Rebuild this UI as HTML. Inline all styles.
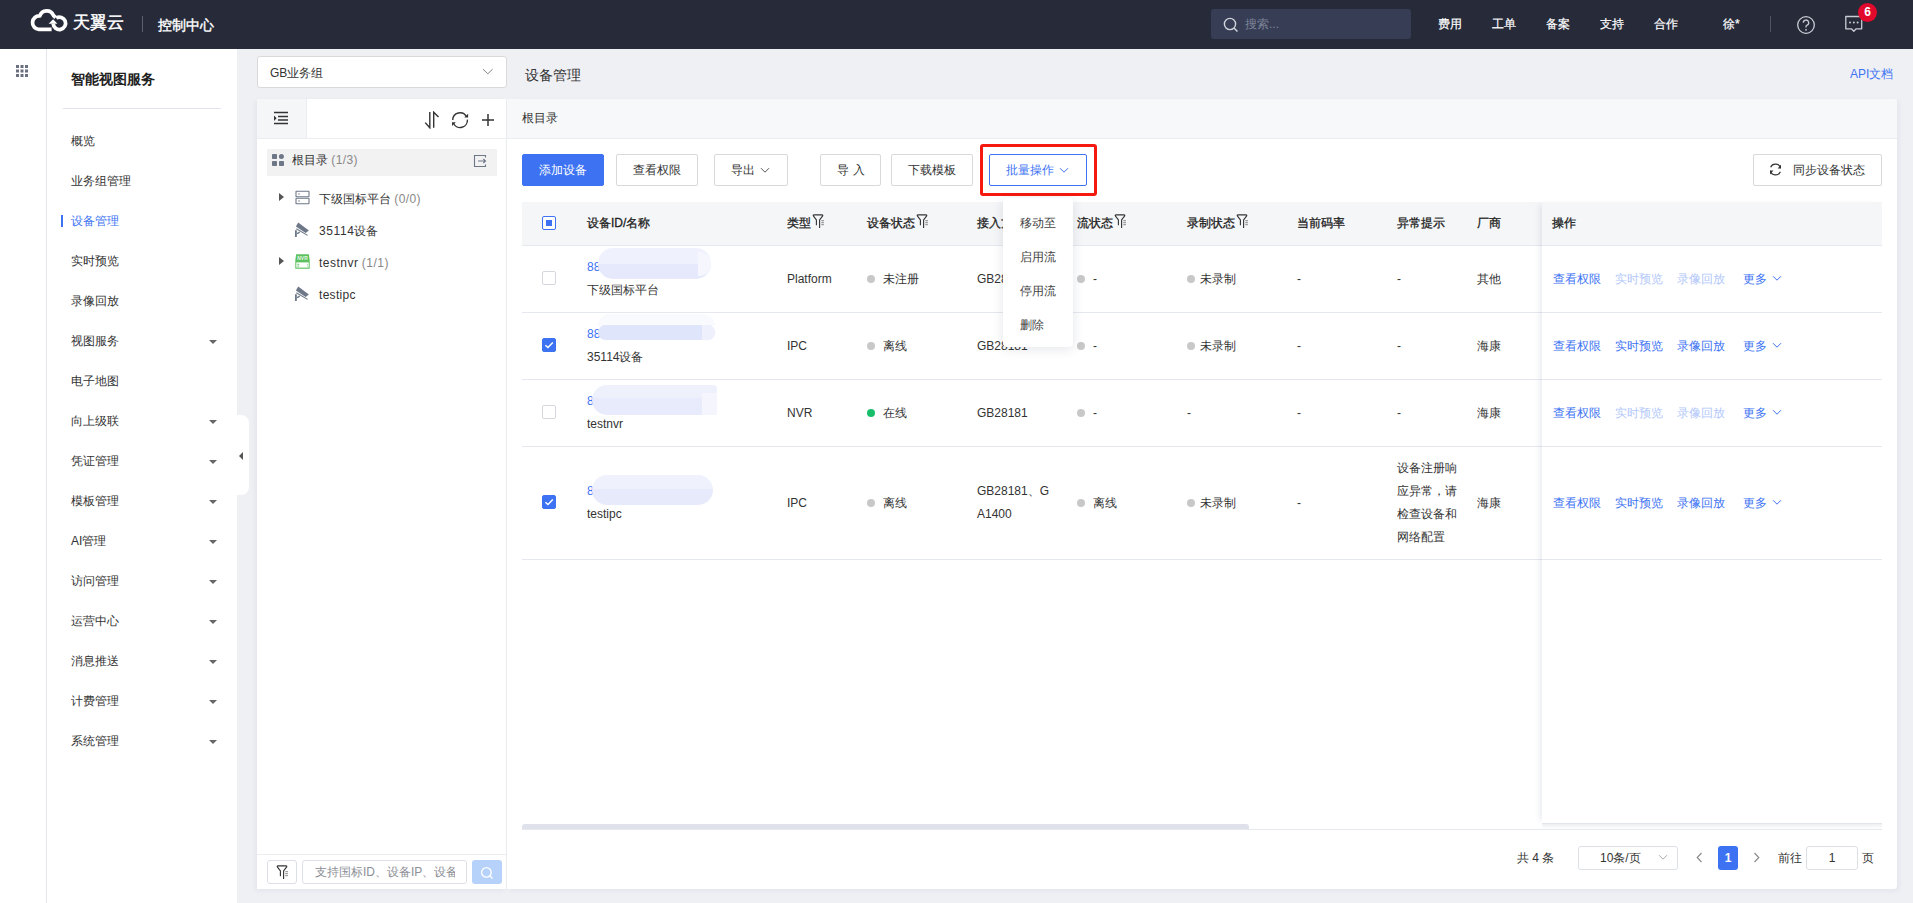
<!DOCTYPE html>
<html><head><meta charset="utf-8">
<style>
*{margin:0;padding:0;box-sizing:border-box}
html,body{width:1913px;height:903px;overflow:hidden;background:#eff0f4;font-family:"Liberation Sans",sans-serif;font-size:12px;color:#333}
.a{position:absolute}
#top{left:0;top:0;width:1913px;height:49px;background:#262a39}
.tw{color:#fff;font-size:13px;top:15px;line-height:18px;-webkit-text-stroke:0.2px #fff}
#rail{left:0;top:49px;width:47px;height:854px;background:#fff;border-right:1px solid #e3e5ec}
#side{left:47px;top:49px;width:190px;height:854px;background:#fff}
.mi{left:71px;font-size:12px;line-height:16px;color:#333}
.car{left:209px;width:0;height:0;border-left:4px solid transparent;border-right:4px solid transparent;border-top:4px solid #666}
#tree{left:257px;top:99px;width:250px;height:790px;background:#fff;border-right:1px solid #ebedf0;box-shadow:-2px 2px 5px rgba(30,40,70,0.05)}
#main{left:507px;top:99px;width:1390px;height:790px;background:#fff;border-radius:0 3px 3px 0;box-shadow:2px 2px 5px rgba(30,40,70,0.05)}
.btn{height:32px;border:1px solid #d9d9d9;border-radius:2px;background:#fff;font-size:12px;line-height:30px;text-align:center;color:#333}
.th{top:202px;font-weight:bold;font-size:12px;line-height:40px;color:#333}
.cb{width:14px;height:14px;border:1px solid #d5d8de;border-radius:2px;background:#fff}
.cbk{background:#3d73f3;border-color:#3d73f3}
.rl{left:522px;width:1360px;height:1px;background:#e8eaf0}
.td{font-size:12px;line-height:16px;color:#333}
.dot{width:7px;height:7px;border-radius:50%;background:#c8c8c8}
.lk{color:#3d73f3}
.lkd{color:#b8ccfa}
</style></head><body>

<!-- top bar -->
<div id="top" class="a">
<svg class="a" style="left:26px;top:5px" width="46" height="31" viewBox="0 0 46 31">
<path d="M25.6 24.3 H12.7 A6.6 6.6 0 0 1 13.8 10.9 A7.2 7.2 0 0 1 27.4 10.4 L29.6 12.6" fill="none" stroke="#fff" stroke-width="3.7" stroke-linejoin="round"/>
<path d="M30.2 13.0 A6.2 6.2 0 1 1 27.2 18.6" fill="none" stroke="#fff" stroke-width="3.7"/>
<path d="M22.6 18.8 L27.1 14.2 L31.4 18.8 Z" fill="#fff"/>
</svg>
<div class="a" style="left:73px;top:12px;font-size:17px;line-height:22px;color:#fff;-webkit-text-stroke:0.5px #fff">天翼云</div>
<div class="a" style="left:142px;top:16px;width:1px;height:16px;background:#5b5f6e"></div>
<div class="a" style="left:158px;top:16px;font-size:14px;line-height:18px;color:#fff;-webkit-text-stroke:0.4px #fff">控制中心</div>
<div class="a" style="left:1211px;top:9px;width:200px;height:30px;background:#363d55;border-radius:3px"></div>
<svg class="a" style="left:1223px;top:17px" width="16" height="16" viewBox="0 0 16 16"><circle cx="7" cy="7" r="5.6" fill="none" stroke="#d0d3da" stroke-width="1.4"/><path d="M11 11 L14.5 14.5" stroke="#d0d3da" stroke-width="1.5"/></svg>
<div class="a" style="left:1245px;top:16px;font-size:12px;line-height:16px;color:#7d8396">搜索...</div>
<div class="a tw" style="left:1438px;font-size:12px;top:15px">费用</div>
<div class="a tw" style="left:1492px;font-size:12px;top:15px">工单</div>
<div class="a tw" style="left:1546px;font-size:12px;top:15px">备案</div>
<div class="a tw" style="left:1600px;font-size:12px;top:15px">支持</div>
<div class="a tw" style="left:1654px;font-size:12px;top:15px">合作</div>
<div class="a tw" style="left:1723px;font-size:12px;top:15px">徐*</div>
<div class="a" style="left:1770px;top:16px;width:1px;height:16px;background:#50545f"></div>
<svg class="a" style="left:1796px;top:15px" width="20" height="20" viewBox="0 0 20 20"><circle cx="10" cy="10" r="8.3" fill="none" stroke="#c9ccd3" stroke-width="1.3"/><path d="M7.3 7.8 A2.7 2.7 0 1 1 10.8 10.3 C10.2 10.6 10 11 10 11.8 V12.6" fill="none" stroke="#c9ccd3" stroke-width="1.3"/><circle cx="10" cy="14.8" r="0.9" fill="#c9ccd3"/></svg>
<svg class="a" style="left:1844px;top:15px" width="20" height="20" viewBox="0 0 20 20"><path d="M1.8 1.5 H17.7 V13.8 H12.2 L9.8 16.3 L7.4 13.8 H1.8 Z" fill="none" stroke="#c9ccd3" stroke-width="1.3" stroke-linejoin="round"/><circle cx="6" cy="7.6" r="1" fill="#c9ccd3"/><circle cx="9.8" cy="7.6" r="1" fill="#c9ccd3"/><circle cx="13.6" cy="7.6" r="1" fill="#c9ccd3"/></svg>
<div class="a" style="left:1858px;top:3px;width:19px;height:19px;border-radius:50%;background:#e1092c;color:#fff;font-size:12px;line-height:19px;text-align:center;font-weight:bold">6</div>
</div>

<div id="rail" class="a"></div>
<svg class="a" style="left:16px;top:65px" width="12" height="12" viewBox="0 0 12 12" fill="#6b7080"><rect x="0" y="0" width="3" height="3"/><rect x="4.5" y="0" width="3" height="3"/><rect x="9" y="0" width="3" height="3"/><rect x="0" y="4.5" width="3" height="3"/><rect x="4.5" y="4.5" width="3" height="3"/><rect x="9" y="4.5" width="3" height="3"/><rect x="0" y="9" width="3" height="3"/><rect x="4.5" y="9" width="3" height="3"/><rect x="9" y="9" width="3" height="3"/></svg>
<div id="side" class="a"></div>
<div class="a" style="left:71px;top:70px;font-size:14px;line-height:18px;font-weight:700;color:#222">智能视图服务</div>
<div class="a" style="left:63px;top:108px;width:158px;height:1px;background:#e1e4ec"></div>
<div class="a mi" style="top:133px;color:#333">概览</div>
<div class="a mi" style="top:173px;color:#333">业务组管理</div>
<div class="a mi" style="top:213px;color:#3d73f3">设备管理</div>
<div class="a" style="left:61px;top:215px;width:2px;height:12px;background:#3d73f3"></div>
<div class="a mi" style="top:253px;color:#333">实时预览</div>
<div class="a mi" style="top:293px;color:#333">录像回放</div>
<div class="a mi" style="top:333px;color:#333">视图服务</div>
<div class="a car" style="top:340px"></div>
<div class="a mi" style="top:373px;color:#333">电子地图</div>
<div class="a mi" style="top:413px;color:#333">向上级联</div>
<div class="a car" style="top:420px"></div>
<div class="a mi" style="top:453px;color:#333">凭证管理</div>
<div class="a car" style="top:460px"></div>
<div class="a mi" style="top:493px;color:#333">模板管理</div>
<div class="a car" style="top:500px"></div>
<div class="a mi" style="top:533px;color:#333">AI管理</div>
<div class="a car" style="top:540px"></div>
<div class="a mi" style="top:573px;color:#333">访问管理</div>
<div class="a car" style="top:580px"></div>
<div class="a mi" style="top:613px;color:#333">运营中心</div>
<div class="a car" style="top:620px"></div>
<div class="a mi" style="top:653px;color:#333">消息推送</div>
<div class="a car" style="top:660px"></div>
<div class="a mi" style="top:693px;color:#333">计费管理</div>
<div class="a car" style="top:700px"></div>
<div class="a mi" style="top:733px;color:#333">系统管理</div>
<div class="a car" style="top:740px"></div>
<div class="a" style="left:237px;top:415px;width:12px;height:80px;background:#fff;border-radius:0 8px 8px 0"></div>
<div class="a" style="left:239px;top:452px;width:0;height:0;border-top:4px solid transparent;border-bottom:4px solid transparent;border-right:4px solid #555"></div>

<div class="a" style="left:257px;top:56px;width:250px;height:32px;background:#fff;border:1px solid #d9d9d9;border-radius:3px"></div>
<div class="a" style="left:270px;top:65px;font-size:12px;line-height:16px;color:#333">GB业务组</div>
<svg class="a" style="left:482px;top:68px" width="12" height="8" viewBox="0 0 12 8"><path d="M1 1.2 L5.8 5.8 L10.6 1.2" fill="none" stroke="#777" stroke-width="0.9"/></svg>
<div id="tree" class="a"></div>
<div class="a" style="left:257px;top:99px;width:49px;height:39px;background:#f5f6f7"></div>
<div class="a" style="left:257px;top:138px;width:249px;height:1px;background:#ebedf0"></div>
<div class="a" style="left:306px;top:99px;width:1px;height:39px;background:#ebedf0"></div>
<svg class="a" style="left:273px;top:111px" width="16" height="14" viewBox="0 0 16 14"><path d="M1 1.5 H15 M5 5.5 H15 M5 9 H15 M1 12.5 H15" stroke="#333" stroke-width="1.3"/><path d="M1 4.5 L3.6 7.2 L1 10 Z" fill="#333"/></svg>
<svg class="a" style="left:424px;top:111px" width="16" height="18" viewBox="0 0 16 18"><path d="M5.8 1 V16.8 L1.2 11.6" fill="none" stroke="#333" stroke-width="1.4"/><path d="M9.7 16.8 V1.2 L14.5 5.9" fill="none" stroke="#333" stroke-width="1.4"/></svg>
<svg class="a" style="left:450px;top:110px" width="20" height="20" viewBox="0 0 20 20"><path d="M2.7 10 A7.3 7.3 0 0 1 16.4 6.6" fill="none" stroke="#333" stroke-width="1.4"/><path d="M17.4 9.6 A7.3 7.3 0 0 1 3.5 13.3" fill="none" stroke="#333" stroke-width="1.4"/><path d="M18.1 3.8 V7.6 H14.3 Z" fill="#333"/><path d="M2 16 V12.2 H5.8 Z" fill="#333"/></svg>
<svg class="a" style="left:481px;top:113px" width="14" height="14" viewBox="0 0 14 14"><path d="M7 1 V13 M1 7 H13" stroke="#333" stroke-width="1.5"/></svg>
<div class="a" style="left:267px;top:149px;width:230px;height:27px;background:#f2f2f3"></div>
<svg class="a" style="left:272px;top:154px" width="12" height="12" viewBox="0 0 12 12" fill="#6e7788"><rect x="0" y="0" width="5" height="5" rx="0.8"/><circle cx="9.4" cy="2.5" r="2.5"/><rect x="0" y="7" width="5" height="5" rx="0.8"/><rect x="7" y="7" width="5" height="5" rx="0.8"/></svg>
<div class="a" style="left:292px;top:152px;font-size:12px;line-height:16px;color:#333">根目录 <span style="color:#888;letter-spacing:0.4px">(1/3)</span></div>
<svg class="a" style="left:473px;top:154px" width="14" height="14" viewBox="0 0 14 14"><path d="M12.5 3.5 V1.5 H1.5 V12.5 H12.5 V10.5" fill="none" stroke="#6e7788" stroke-width="1.1"/><path d="M5 7 H12.5 M10.3 5 L12.5 7 L10.3 9" fill="none" stroke="#6e7788" stroke-width="1.1"/></svg>
<div class="a" style="left:279px;top:193px;width:0;height:0;border-top:4px solid transparent;border-bottom:4px solid transparent;border-left:5px solid #555"></div>
<svg class="a" style="left:295px;top:190px" width="15" height="15" viewBox="0 0 15 15"><rect x="1" y="1.2" width="13" height="5.6" rx="0.6" fill="none" stroke="#6e7788" stroke-width="1.1"/><rect x="1" y="8.2" width="13" height="5.6" rx="0.6" fill="none" stroke="#6e7788" stroke-width="1.1"/><path d="M3 4 H5 M3 11 H5" stroke="#6e7788" stroke-width="0.8"/></svg>
<div class="a" style="left:319px;top:191px;font-size:12px;line-height:16px;color:#333">下级国标平台 <span style="color:#888;letter-spacing:0.4px">(0/0)</span></div>
<svg class="a" style="left:294px;top:221px" width="16" height="17" viewBox="0 0 16 17"><path d="M4.2 1.4 L14.9 9.4 L11.6 12.1 L1.9 5.6 Z" fill="#6e7788"/><path d="M2.3 7.7 L13.6 14.4" stroke="#6e7788" stroke-width="1.1"/><path d="M1.9 9.2 V15.9" stroke="#6e7788" stroke-width="1.8"/><path d="M2.6 12.6 Q4.6 12.6 5.6 10.9" fill="none" stroke="#6e7788" stroke-width="1.4"/></svg>
<div class="a" style="left:319px;top:223px;font-size:12px;line-height:16px;color:#333"><span style="letter-spacing:0.6px">35114</span>设备</div>
<div class="a" style="left:279px;top:257px;width:0;height:0;border-top:4px solid transparent;border-bottom:4px solid transparent;border-left:5px solid #555"></div>
<svg class="a" style="left:295px;top:254px" width="15" height="15" viewBox="0 0 15 15"><path d="M1.2 0.3 H13.8 L14.7 6 V14.7 H0.3 V6 Z" fill="#5cc15f"/><rect x="1.3" y="8.4" width="12.4" height="5.2" fill="#fff"/><path d="M2.3 10.3 H4.2 M2.3 12.1 H4.2 M12.2 10.3 H12.8 M12.2 12.1 H12.8" stroke="#5cc15f" stroke-width="0.9"/><text x="7.5" y="5.9" font-size="5" fill="#e6f6e6" text-anchor="middle" font-family="Liberation Sans" font-weight="bold">NVR</text></svg>
<div class="a" style="left:319px;top:255px;font-size:12px;line-height:16px;color:#333"><span style="letter-spacing:0.5px">testnvr</span> <span style="color:#888;letter-spacing:0.5px">(1/1)</span></div>
<svg class="a" style="left:294px;top:285px" width="16" height="17" viewBox="0 0 16 17"><path d="M4.2 1.4 L14.9 9.4 L11.6 12.1 L1.9 5.6 Z" fill="#6e7788"/><path d="M2.3 7.7 L13.6 14.4" stroke="#6e7788" stroke-width="1.1"/><path d="M1.9 9.2 V15.9" stroke="#6e7788" stroke-width="1.8"/><path d="M2.6 12.6 Q4.6 12.6 5.6 10.9" fill="none" stroke="#6e7788" stroke-width="1.4"/></svg>
<div class="a" style="left:319px;top:287px;font-size:12px;line-height:16px;color:#333;letter-spacing:0.3px">testipc</div>
<div class="a" style="left:257px;top:854px;width:249px;height:1px;background:#ebedf0"></div>
<div class="a" style="left:267px;top:860px;width:30px;height:24px;border:1px solid #dcdfe6;border-radius:3px;background:#fff"></div>
<svg class="a" style="left:276px;top:865px" width="13" height="15" viewBox="0 0 13 15"><path d="M1.3 1.9 Q0.9 0.9 2 0.9 H10 Q11.1 0.9 10.7 1.9 L7.6 5.9 V14 M1.3 1.9 L4.4 5.9 V11.2" fill="none" stroke="#333" stroke-width="1.1" stroke-linejoin="round"/><path d="M9.3 6.7 H11.9 M9.3 8.7 H11.9 M9.3 10.7 H11.9" stroke="#777" stroke-width="0.9"/></svg>
<div class="a" style="left:302px;top:860px;width:165px;height:24px;border:1px solid #dcdfe6;border-radius:3px;background:#fff;overflow:hidden"></div>
<div class="a" style="left:315px;top:864px;width:140px;height:16px;overflow:hidden;white-space:nowrap;font-size:12px;line-height:16px;color:#8c8f96">支持国标ID、设备IP、设备名称</div>
<div class="a" style="left:472px;top:860px;width:30px;height:24px;border-radius:3px;background:#b6d2fb"></div>
<svg class="a" style="left:480px;top:866px" width="14" height="14" viewBox="0 0 14 14"><circle cx="6.4" cy="6.4" r="4.8" fill="none" stroke="#fff" stroke-width="1.3"/><path d="M9.8 9.8 L12.5 12.5" stroke="#fff" stroke-width="1.3"/></svg>
<div id="main" class="a"></div>
<div class="a" style="left:525px;top:66px;font-size:14px;line-height:18px;color:#333">设备管理</div>
<div class="a" style="left:1850px;top:66px;font-size:12px;line-height:16px;color:#3d73f3">API文档</div>
<div class="a" style="left:507px;top:99px;width:1390px;height:39px;background:#f7f8f9;border-radius:0 3px 0 0"></div>
<div class="a" style="left:507px;top:138px;width:1390px;height:1px;background:#ebedf0"></div>
<div class="a" style="left:522px;top:110px;font-size:12px;line-height:16px;color:#333">根目录</div>
<div class="a btn" style="left:522px;top:154px;width:82px;background:#3d73f3;border-color:#3d73f3;color:#fff">添加设备</div>
<div class="a btn" style="left:616px;top:154px;width:82px">查看权限</div>
<div class="a btn" style="left:714px;top:154px;width:74px;text-align:left;padding-left:16px">导出</div>
<svg class="a" style="left:760px;top:167px" width="10" height="7" viewBox="0 0 10 7"><path d="M1 1.2 L5 5.2 L9 1.2" fill="none" stroke="#555" stroke-width="1"/></svg>
<div class="a btn" style="left:820px;top:154px;width:61px;letter-spacing:4px;padding-left:4px">导入</div>
<div class="a btn" style="left:891px;top:154px;width:82px">下载模板</div>
<div class="a" style="left:980px;top:144px;width:117px;height:52px;border:3px solid #f5190f;border-radius:3px"></div>
<div class="a btn" style="left:989px;top:154px;width:98px;border-color:#3d73f3;color:#3d73f3;text-align:left;padding-left:16px">批量操作</div>
<svg class="a" style="left:1059px;top:167px" width="10" height="7" viewBox="0 0 10 7"><path d="M1 1.2 L5 5.2 L9 1.2" fill="none" stroke="#3d73f3" stroke-width="1"/></svg>
<div class="a btn" style="left:1753px;top:154px;width:129px;text-align:left;padding-left:39px">同步设备状态</div>
<div class="a" style="left:522px;top:202px;width:1360px;height:43px;background:#f5f6f8"></div>
<div class="a" style="left:522px;top:245px;width:1360px;height:1px;background:#e6e8ef"></div>
<div class="a cb" style="left:542px;top:216px;border-color:#3d73f3"></div><div class="a" style="left:546px;top:220px;width:6px;height:6px;background:#3d73f3"></div>
<div class="a" style="left:587px;top:215px;font-size:12px;line-height:16px;color:#222;-webkit-text-stroke:0.3px #222">设备ID/名称</div>
<div class="a" style="left:787px;top:215px;font-size:12px;line-height:16px;color:#222;-webkit-text-stroke:0.3px #222">类型</div>
<div class="a" style="left:867px;top:215px;font-size:12px;line-height:16px;color:#222;-webkit-text-stroke:0.3px #222">设备状态</div>
<div class="a" style="left:977px;top:215px;font-size:12px;line-height:16px;color:#222;-webkit-text-stroke:0.3px #222">接入方式</div>
<div class="a" style="left:1077px;top:215px;font-size:12px;line-height:16px;color:#222;-webkit-text-stroke:0.3px #222">流状态</div>
<div class="a" style="left:1187px;top:215px;font-size:12px;line-height:16px;color:#222;-webkit-text-stroke:0.3px #222">录制状态</div>
<div class="a" style="left:1297px;top:215px;font-size:12px;line-height:16px;color:#222;-webkit-text-stroke:0.3px #222">当前码率</div>
<div class="a" style="left:1397px;top:215px;font-size:12px;line-height:16px;color:#222;-webkit-text-stroke:0.3px #222">异常提示</div>
<div class="a" style="left:1477px;top:215px;font-size:12px;line-height:16px;color:#222;-webkit-text-stroke:0.3px #222">厂商</div>
<div class="a" style="left:1552px;top:215px;font-size:12px;line-height:16px;color:#222;-webkit-text-stroke:0.3px #222">操作</div>
<svg class="a" style="left:812px;top:214px" width="13" height="15" viewBox="0 0 13 15"><path d="M1.3 1.9 Q0.9 0.9 2 0.9 H10 Q11.1 0.9 10.7 1.9 L7.6 5.9 V14 M1.3 1.9 L4.4 5.9 V11.2" fill="none" stroke="#333" stroke-width="1.1" stroke-linejoin="round"/><path d="M9.3 6.7 H11.9 M9.3 8.7 H11.9 M9.3 10.7 H11.9" stroke="#777" stroke-width="0.9"/></svg>
<svg class="a" style="left:916px;top:214px" width="13" height="15" viewBox="0 0 13 15"><path d="M1.3 1.9 Q0.9 0.9 2 0.9 H10 Q11.1 0.9 10.7 1.9 L7.6 5.9 V14 M1.3 1.9 L4.4 5.9 V11.2" fill="none" stroke="#333" stroke-width="1.1" stroke-linejoin="round"/><path d="M9.3 6.7 H11.9 M9.3 8.7 H11.9 M9.3 10.7 H11.9" stroke="#777" stroke-width="0.9"/></svg>
<svg class="a" style="left:1114px;top:214px" width="13" height="15" viewBox="0 0 13 15"><path d="M1.3 1.9 Q0.9 0.9 2 0.9 H10 Q11.1 0.9 10.7 1.9 L7.6 5.9 V14 M1.3 1.9 L4.4 5.9 V11.2" fill="none" stroke="#333" stroke-width="1.1" stroke-linejoin="round"/><path d="M9.3 6.7 H11.9 M9.3 8.7 H11.9 M9.3 10.7 H11.9" stroke="#777" stroke-width="0.9"/></svg>
<svg class="a" style="left:1236px;top:214px" width="13" height="15" viewBox="0 0 13 15"><path d="M1.3 1.9 Q0.9 0.9 2 0.9 H10 Q11.1 0.9 10.7 1.9 L7.6 5.9 V14 M1.3 1.9 L4.4 5.9 V11.2" fill="none" stroke="#333" stroke-width="1.1" stroke-linejoin="round"/><path d="M9.3 6.7 H11.9 M9.3 8.7 H11.9 M9.3 10.7 H11.9" stroke="#777" stroke-width="0.9"/></svg>
<div class="a" style="left:522px;top:312px;width:1360px;height:1px;background:#e6e8ef"></div>
<div class="a" style="left:522px;top:379px;width:1360px;height:1px;background:#e6e8ef"></div>
<div class="a" style="left:522px;top:446px;width:1360px;height:1px;background:#e6e8ef"></div>
<div class="a" style="left:522px;top:559px;width:1360px;height:1px;background:#e6e8ef"></div>
<div class="a cb" style="left:542px;top:271px"></div>
<div class="a" style="left:587px;top:259px;font-size:12px;line-height:16px;color:#3d73f3;white-space:nowrap;">88</div>
<div class="a" style="left:587px;top:282px;font-size:12px;line-height:16px;color:#333;white-space:nowrap;">下级国标平台</div>
<div class="a" style="left:787px;top:271px;font-size:12px;line-height:16px;color:#333;white-space:nowrap;">Platform</div>
<div class="a dot" style="left:867px;top:275px;width:8px;height:8px;background:#c8c8c8"></div>
<div class="a" style="left:883px;top:271px;font-size:12px;line-height:16px;color:#333;white-space:nowrap;">未注册</div>
<div class="a" style="left:977px;top:271px;font-size:12px;line-height:16px;color:#333;white-space:nowrap;">GB28181</div>
<div class="a dot" style="left:1077px;top:275px;width:8px;height:8px"></div>
<div class="a" style="left:1093px;top:271px;font-size:12px;line-height:16px;color:#333;white-space:nowrap;">-</div>
<div class="a dot" style="left:1187px;top:275px;width:8px;height:8px"></div>
<div class="a" style="left:1200px;top:271px;font-size:12px;line-height:16px;color:#333;white-space:nowrap;">未录制</div>
<div class="a" style="left:1297px;top:271px;font-size:12px;line-height:16px;color:#333;white-space:nowrap;">-</div>
<div class="a" style="left:1397px;top:271px;font-size:12px;line-height:16px;color:#333;white-space:nowrap;">-</div>
<div class="a" style="left:1477px;top:271px;font-size:12px;line-height:16px;color:#333;white-space:nowrap;">其他</div>
<div class="a" style="left:1553px;top:271px;font-size:12px;line-height:16px;color:#3d73f3;white-space:nowrap;">查看权限</div>
<div class="a" style="left:1615px;top:271px;font-size:12px;line-height:16px;color:#b3c8fb;white-space:nowrap;">实时预览</div>
<div class="a" style="left:1677px;top:271px;font-size:12px;line-height:16px;color:#b3c8fb;white-space:nowrap;">录像回放</div>
<div class="a" style="left:1743px;top:271px;font-size:12px;line-height:16px;color:#3d73f3;white-space:nowrap;">更多</div>
<svg class="a" style="left:1772px;top:275px" width="10" height="7" viewBox="0 0 10 7"><path d="M1 1.2 L5 5.2 L9 1.2" fill="none" stroke="#3d73f3" stroke-width="1"/></svg>
<div class="a cb cbk" style="left:542px;top:338px"></div><svg class="a" style="left:542px;top:338px" width="14" height="14" viewBox="0 0 14 14"><path d="M3.4 7.2 L6 9.6 L10.8 4.6" fill="none" stroke="#fff" stroke-width="1.4"/></svg>
<div class="a" style="left:587px;top:326px;font-size:12px;line-height:16px;color:#3d73f3;white-space:nowrap;">88</div>
<div class="a" style="left:587px;top:349px;font-size:12px;line-height:16px;color:#333;white-space:nowrap;">35114设备</div>
<div class="a" style="left:787px;top:338px;font-size:12px;line-height:16px;color:#333;white-space:nowrap;">IPC</div>
<div class="a dot" style="left:867px;top:342px;width:8px;height:8px;background:#c8c8c8"></div>
<div class="a" style="left:883px;top:338px;font-size:12px;line-height:16px;color:#333;white-space:nowrap;">离线</div>
<div class="a" style="left:977px;top:338px;font-size:12px;line-height:16px;color:#333;white-space:nowrap;">GB28181</div>
<div class="a dot" style="left:1077px;top:342px;width:8px;height:8px"></div>
<div class="a" style="left:1093px;top:338px;font-size:12px;line-height:16px;color:#333;white-space:nowrap;">-</div>
<div class="a dot" style="left:1187px;top:342px;width:8px;height:8px"></div>
<div class="a" style="left:1200px;top:338px;font-size:12px;line-height:16px;color:#333;white-space:nowrap;">未录制</div>
<div class="a" style="left:1297px;top:338px;font-size:12px;line-height:16px;color:#333;white-space:nowrap;">-</div>
<div class="a" style="left:1397px;top:338px;font-size:12px;line-height:16px;color:#333;white-space:nowrap;">-</div>
<div class="a" style="left:1477px;top:338px;font-size:12px;line-height:16px;color:#333;white-space:nowrap;">海康</div>
<div class="a" style="left:1553px;top:338px;font-size:12px;line-height:16px;color:#3d73f3;white-space:nowrap;">查看权限</div>
<div class="a" style="left:1615px;top:338px;font-size:12px;line-height:16px;color:#3d73f3;white-space:nowrap;">实时预览</div>
<div class="a" style="left:1677px;top:338px;font-size:12px;line-height:16px;color:#3d73f3;white-space:nowrap;">录像回放</div>
<div class="a" style="left:1743px;top:338px;font-size:12px;line-height:16px;color:#3d73f3;white-space:nowrap;">更多</div>
<svg class="a" style="left:1772px;top:342px" width="10" height="7" viewBox="0 0 10 7"><path d="M1 1.2 L5 5.2 L9 1.2" fill="none" stroke="#3d73f3" stroke-width="1"/></svg>
<div class="a cb" style="left:542px;top:405px"></div>
<div class="a" style="left:587px;top:393px;font-size:12px;line-height:16px;color:#3d73f3;white-space:nowrap;">8</div>
<div class="a" style="left:587px;top:416px;font-size:12px;line-height:16px;color:#333;white-space:nowrap;">testnvr</div>
<div class="a" style="left:787px;top:405px;font-size:12px;line-height:16px;color:#333;white-space:nowrap;">NVR</div>
<div class="a dot" style="left:867px;top:409px;width:8px;height:8px;background:#19be6b"></div>
<div class="a" style="left:883px;top:405px;font-size:12px;line-height:16px;color:#333;white-space:nowrap;">在线</div>
<div class="a" style="left:977px;top:405px;font-size:12px;line-height:16px;color:#333;white-space:nowrap;">GB28181</div>
<div class="a dot" style="left:1077px;top:409px;width:8px;height:8px"></div>
<div class="a" style="left:1093px;top:405px;font-size:12px;line-height:16px;color:#333;white-space:nowrap;">-</div>
<div class="a" style="left:1187px;top:405px;font-size:12px;line-height:16px;color:#333;white-space:nowrap;">-</div>
<div class="a" style="left:1297px;top:405px;font-size:12px;line-height:16px;color:#333;white-space:nowrap;">-</div>
<div class="a" style="left:1397px;top:405px;font-size:12px;line-height:16px;color:#333;white-space:nowrap;">-</div>
<div class="a" style="left:1477px;top:405px;font-size:12px;line-height:16px;color:#333;white-space:nowrap;">海康</div>
<div class="a" style="left:1553px;top:405px;font-size:12px;line-height:16px;color:#3d73f3;white-space:nowrap;">查看权限</div>
<div class="a" style="left:1615px;top:405px;font-size:12px;line-height:16px;color:#b3c8fb;white-space:nowrap;">实时预览</div>
<div class="a" style="left:1677px;top:405px;font-size:12px;line-height:16px;color:#b3c8fb;white-space:nowrap;">录像回放</div>
<div class="a" style="left:1743px;top:405px;font-size:12px;line-height:16px;color:#3d73f3;white-space:nowrap;">更多</div>
<svg class="a" style="left:1772px;top:409px" width="10" height="7" viewBox="0 0 10 7"><path d="M1 1.2 L5 5.2 L9 1.2" fill="none" stroke="#3d73f3" stroke-width="1"/></svg>
<div class="a cb cbk" style="left:542px;top:495px"></div><svg class="a" style="left:542px;top:495px" width="14" height="14" viewBox="0 0 14 14"><path d="M3.4 7.2 L6 9.6 L10.8 4.6" fill="none" stroke="#fff" stroke-width="1.4"/></svg>
<div class="a" style="left:587px;top:483px;font-size:12px;line-height:16px;color:#3d73f3;white-space:nowrap;">8</div>
<div class="a" style="left:587px;top:506px;font-size:12px;line-height:16px;color:#333;white-space:nowrap;">testipc</div>
<div class="a" style="left:787px;top:495px;font-size:12px;line-height:16px;color:#333;white-space:nowrap;">IPC</div>
<div class="a dot" style="left:867px;top:499px;width:8px;height:8px;background:#c8c8c8"></div>
<div class="a" style="left:883px;top:495px;font-size:12px;line-height:16px;color:#333;white-space:nowrap;">离线</div>
<div class="a" style="left:977px;top:483px;font-size:12px;line-height:16px;color:#333;white-space:nowrap;">GB28181、G</div>
<div class="a" style="left:977px;top:506px;font-size:12px;line-height:16px;color:#333;white-space:nowrap;">A1400</div>
<div class="a dot" style="left:1077px;top:499px;width:8px;height:8px"></div>
<div class="a" style="left:1093px;top:495px;font-size:12px;line-height:16px;color:#333;white-space:nowrap;">离线</div>
<div class="a dot" style="left:1187px;top:499px;width:8px;height:8px"></div>
<div class="a" style="left:1200px;top:495px;font-size:12px;line-height:16px;color:#333;white-space:nowrap;">未录制</div>
<div class="a" style="left:1297px;top:495px;font-size:12px;line-height:16px;color:#333;white-space:nowrap;">-</div>
<div class="a" style="left:1397px;top:460px;font-size:12px;line-height:16px;color:#333;white-space:nowrap;">设备注册响</div>
<div class="a" style="left:1397px;top:483px;font-size:12px;line-height:16px;color:#333;white-space:nowrap;">应异常，请</div>
<div class="a" style="left:1397px;top:506px;font-size:12px;line-height:16px;color:#333;white-space:nowrap;">检查设备和</div>
<div class="a" style="left:1397px;top:529px;font-size:12px;line-height:16px;color:#333;white-space:nowrap;">网络配置</div>
<div class="a" style="left:1477px;top:495px;font-size:12px;line-height:16px;color:#333;white-space:nowrap;">海康</div>
<div class="a" style="left:1553px;top:495px;font-size:12px;line-height:16px;color:#3d73f3;white-space:nowrap;">查看权限</div>
<div class="a" style="left:1615px;top:495px;font-size:12px;line-height:16px;color:#3d73f3;white-space:nowrap;">实时预览</div>
<div class="a" style="left:1677px;top:495px;font-size:12px;line-height:16px;color:#3d73f3;white-space:nowrap;">录像回放</div>
<div class="a" style="left:1743px;top:495px;font-size:12px;line-height:16px;color:#3d73f3;white-space:nowrap;">更多</div>
<svg class="a" style="left:1772px;top:499px" width="10" height="7" viewBox="0 0 10 7"><path d="M1 1.2 L5 5.2 L9 1.2" fill="none" stroke="#3d73f3" stroke-width="1"/></svg>
<div class="a" style="left:598px;top:248px;width:113px;height:31px;border-radius:15px;background:linear-gradient(to bottom,#eff1fd 0,#eff1fd 52%,#e5e9fb 52%,#e5e9fb 100%)"></div>
<div class="a" style="left:698px;top:252px;width:13px;height:24px;border-radius:0 12px 12px 0;background:#f6f7fe"></div>
<div class="a" style="left:598px;top:314px;width:117px;height:12px;border-radius:12px 12px 0 0;background:#f9fafd"></div>
<div class="a" style="left:598px;top:325px;width:117px;height:15px;border-radius:8px;background:#dfe5fa"></div>
<div class="a" style="left:702px;top:325px;width:13px;height:15px;border-radius:0 8px 8px 0;background:#eef0fc"></div>
<div class="a" style="left:592px;top:385px;width:125px;height:30px;border-radius:15px 4px 0 15px;background:linear-gradient(to bottom,#eef0fc 0,#eef0fc 45%,#e7ebfb 45%,#e7ebfb 100%)"></div>
<div class="a" style="left:702px;top:393px;width:15px;height:22px;background:#f5f6fd"></div>
<div class="a" style="left:592px;top:475px;width:121px;height:30px;border-radius:15px;background:linear-gradient(to bottom,#eff1fc 0,#eff1fc 48%,#e7eafb 48%,#e7eafb 100%)"></div>
<div class="a" style="left:1542px;top:202px;width:340px;height:621px;box-shadow:-5px 0 6px -3px rgba(40,50,90,0.10)"></div>
<div class="a" style="left:1542px;top:823px;width:340px;height:6px;background:linear-gradient(to bottom,rgba(40,50,90,0.09),rgba(40,50,90,0.0))"></div>
<div class="a" style="left:1542px;top:823px;width:340px;height:1px;background:#e3e5ee"></div>
<svg class="a" style="left:1768px;top:162px" width="15" height="15" viewBox="0 0 15 15"><path d="M12.6 6.2 A5.3 5.3 0 0 0 2.6 5.2" fill="none" stroke="#333" stroke-width="1.2"/><path d="M2.4 8.8 A5.3 5.3 0 0 0 12.4 9.8" fill="none" stroke="#333" stroke-width="1.2"/><path d="M13 2.6 V6.6 H9.6 Z" fill="#333"/><path d="M2 12.4 V8.4 H5.4 Z" fill="#333"/></svg>



<div class="a" style="left:522px;top:824px;width:727px;height:6px;background:#dfe2eb;border-radius:3px 3px 0 0"></div>
<div class="a" style="left:522px;top:829px;width:1360px;height:1px;background:#e6e8ef"></div>
<div class="a" style="left:1517px;top:850px;font-size:12px;line-height:16px;color:#333">共 4 条</div>
<div class="a" style="left:1578px;top:846px;width:100px;height:24px;border:1px solid #dcdfe6;border-radius:3px;background:#fff"></div>
<div class="a" style="left:1600px;top:850px;font-size:12px;line-height:16px;color:#333">10条/页</div>
<svg class="a" style="left:1658px;top:854px" width="10" height="7" viewBox="0 0 10 7"><path d="M1 1.2 L5 5.2 L9 1.2" fill="none" stroke="#aaa" stroke-width="1"/></svg>
<svg class="a" style="left:1695px;top:852px" width="9" height="11" viewBox="0 0 9 11"><path d="M6.5 1 L2.2 5.5 L6.5 10" fill="none" stroke="#888" stroke-width="1.1"/></svg>
<div class="a" style="left:1718px;top:846px;width:20px;height:24px;border-radius:3px;background:#3d73f3;color:#fff;font-size:12px;line-height:24px;text-align:center;font-weight:bold">1</div>
<svg class="a" style="left:1752px;top:852px" width="9" height="11" viewBox="0 0 9 11"><path d="M2.5 1 L6.8 5.5 L2.5 10" fill="none" stroke="#888" stroke-width="1.1"/></svg>
<div class="a" style="left:1778px;top:850px;font-size:12px;line-height:16px;color:#333">前往</div>
<div class="a" style="left:1806px;top:846px;width:52px;height:24px;border:1px solid #dcdfe6;border-radius:3px;background:#fff;text-align:center;font-size:12px;line-height:22px;color:#333">1</div>
<div class="a" style="left:1862px;top:850px;font-size:12px;line-height:16px;color:#333">页</div>
<div class="a" style="left:1003px;top:198px;width:70px;height:149px;background:#fff;border-radius:4px;box-shadow:0 2px 12px rgba(30,40,80,0.12)"></div>
<div class="a" style="left:1020px;top:215px;font-size:12px;line-height:16px;color:#444">移动至</div>
<div class="a" style="left:1020px;top:249px;font-size:12px;line-height:16px;color:#444">启用流</div>
<div class="a" style="left:1020px;top:283px;font-size:12px;line-height:16px;color:#444">停用流</div>
<div class="a" style="left:1020px;top:317px;font-size:12px;line-height:16px;color:#444">删除</div>
</body></html>
